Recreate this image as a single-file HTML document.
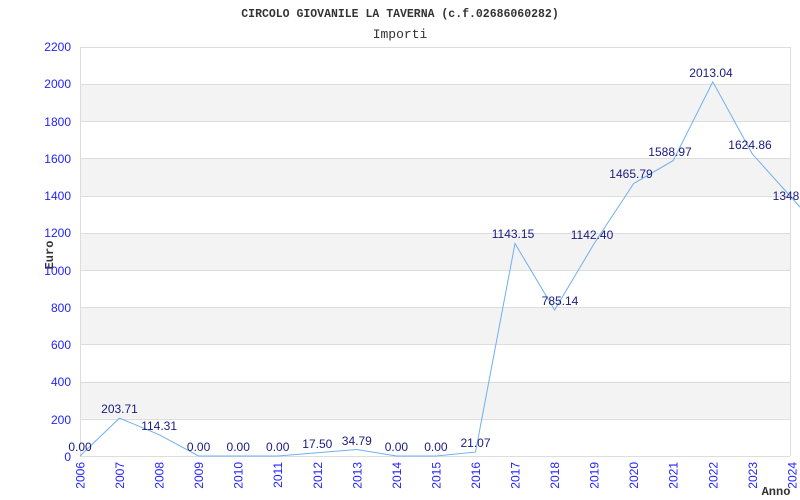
<!DOCTYPE html>
<html><head><meta charset="utf-8"><style>
html,body{margin:0;padding:0;background:#fff;width:800px;height:500px;overflow:hidden}
svg{display:block}
</style></head><body>
<svg width="800" height="500" xmlns="http://www.w3.org/2000/svg">
<rect width="800" height="500" fill="#fff"/>
<g fill="#f3f3f3">
<rect x="80" y="84.2" width="710" height="37.2"/>
<rect x="80" y="158.6" width="710" height="37.2"/>
<rect x="80" y="232.9" width="710" height="37.2"/>
<rect x="80" y="307.3" width="710" height="37.2"/>
<rect x="80" y="381.6" width="710" height="37.2"/>
</g>
<g stroke="#dddddd" stroke-width="1">
<line x1="80" y1="47.5" x2="790" y2="47.5"/>
<line x1="80" y1="84.5" x2="790" y2="84.5"/>
<line x1="80" y1="121.5" x2="790" y2="121.5"/>
<line x1="80" y1="158.5" x2="790" y2="158.5"/>
<line x1="80" y1="196.5" x2="790" y2="196.5"/>
<line x1="80" y1="233.5" x2="790" y2="233.5"/>
<line x1="80" y1="270.5" x2="790" y2="270.5"/>
<line x1="80" y1="307.5" x2="790" y2="307.5"/>
<line x1="80" y1="344.5" x2="790" y2="344.5"/>
<line x1="80" y1="382.5" x2="790" y2="382.5"/>
<line x1="80" y1="419.5" x2="790" y2="419.5"/>
<line x1="80" y1="456.5" x2="790" y2="456.5"/>
<line x1="80.5" y1="47" x2="80.5" y2="456"/>
<line x1="790.5" y1="47" x2="790.5" y2="456"/>
</g>
<g font-family="Liberation Mono, monospace" fill="#333" text-anchor="middle">
<text x="400" y="17" font-size="11.5" font-weight="bold">CIRCOLO GIOVANILE LA TAVERNA (c.f.02686060282)</text>
<text x="400" y="38" font-size="13">Importi</text>
<text x="776" y="495" font-size="12" font-weight="bold">Anno</text>
<text transform="translate(53,255) rotate(-90)" font-size="12" font-weight="bold">Euro</text>
</g>
<g font-family="Liberation Sans, sans-serif" font-size="12" fill="#2222ff" text-anchor="end">
<text x="71" y="51">2200</text><text x="71" y="88">2000</text><text x="71" y="126">1800</text>
<text x="71" y="163">1600</text><text x="71" y="200">1400</text><text x="71" y="237">1200</text>
<text x="71" y="275">1000</text><text x="71" y="312">800</text><text x="71" y="349">600</text>
<text x="71" y="386">400</text><text x="71" y="424">200</text><text x="71" y="461">0</text>
</g>
<g font-family="Liberation Sans, sans-serif" font-size="12" fill="#2222ff" text-anchor="end">
<text transform="translate(84.5,462) rotate(-90)">2006</text>
<text transform="translate(124,462) rotate(-90)">2007</text>
<text transform="translate(163.6,462) rotate(-90)">2008</text>
<text transform="translate(203.1,462) rotate(-90)">2009</text>
<text transform="translate(242.7,462) rotate(-90)">2010</text>
<text transform="translate(282.2,462) rotate(-90)">2011</text>
<text transform="translate(321.8,462) rotate(-90)">2012</text>
<text transform="translate(361.3,462) rotate(-90)">2013</text>
<text transform="translate(400.9,462) rotate(-90)">2014</text>
<text transform="translate(440.4,462) rotate(-90)">2015</text>
<text transform="translate(480,462) rotate(-90)">2016</text>
<text transform="translate(519.5,462) rotate(-90)">2017</text>
<text transform="translate(559.1,462) rotate(-90)">2018</text>
<text transform="translate(598.6,462) rotate(-90)">2019</text>
<text transform="translate(638.2,462) rotate(-90)">2020</text>
<text transform="translate(677.7,462) rotate(-90)">2021</text>
<text transform="translate(717.3,462) rotate(-90)">2022</text>
<text transform="translate(756.8,462) rotate(-90)">2023</text>
<text transform="translate(796.4,462) rotate(-90)">2024</text>
</g>
<polyline fill="none" stroke="#6fb0f0" stroke-width="1" points="80,456 119.5,418.1 159.1,434.7 198.6,456 238.2,456 277.7,456 317.3,452.7 356.8,449.5 396.4,456 435.9,456 475.5,452.1 515,243.5 554.6,310 594.1,243.6 633.7,183.5 673.2,160.6 712.8,81.8 752.3,153.9 800,207"/>
<g font-family="Liberation Sans, sans-serif" font-size="12" fill="#1a1a80" text-anchor="middle">
<text x="80" y="451">0.00</text>
<text x="119.5" y="413">203.71</text>
<text x="159.1" y="430">114.31</text>
<text x="198.6" y="451">0.00</text>
<text x="238.2" y="451">0.00</text>
<text x="277.7" y="451">0.00</text>
<text x="317.3" y="448">17.50</text>
<text x="356.8" y="445">34.79</text>
<text x="396.4" y="451">0.00</text>
<text x="435.9" y="451">0.00</text>
<text x="475.5" y="447">21.07</text>
<text x="513" y="238">1143.15</text>
<text x="560" y="305">785.14</text>
<text x="592" y="239">1142.40</text>
<text x="631" y="178">1465.79</text>
<text x="670" y="156">1588.97</text>
<text x="711" y="77">2013.04</text>
<text x="750" y="149">1624.86</text>
<text x="791" y="200">1348.7</text>
</g>
</svg>
</body></html>
